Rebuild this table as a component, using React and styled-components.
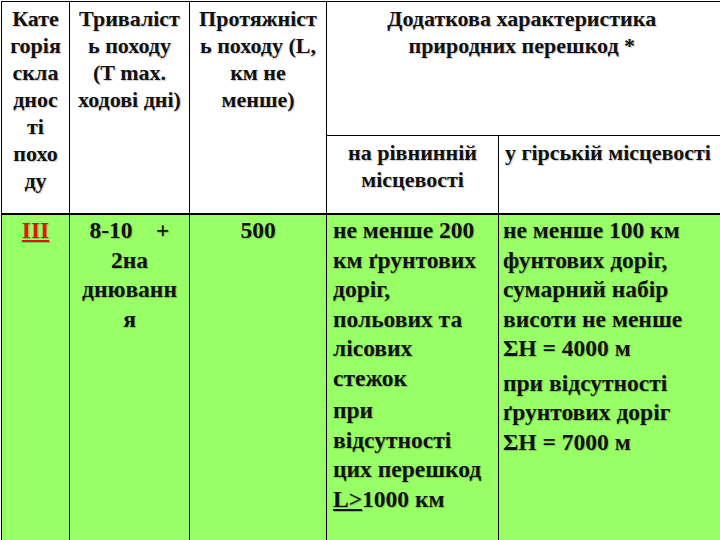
import React from "react";
import styled, { createGlobalStyle } from "styled-components";

const GlobalStyle = createGlobalStyle`
  html, body {
    margin: 0;
    padding: 0;
    background: #ffffff;
  }
  body {
    width: 720px;
    height: 540px;
    overflow: hidden;
    font-family: 'Liberation Serif', serif;
  }
  table, th, td, p, span {
    font-family: 'Liberation Serif', serif;
  }
`;

const Table = styled.table`
  width: 740px;
  table-layout: fixed;
  border-collapse: collapse;
  margin-top: 1px;
  margin-left: 1px;
  color: #111;
  font-weight: bold;
  text-shadow: 1px 1px 1px rgba(0, 0, 0, 0.22);
`;

const Col = styled.col`
  width: ${({ $w }) => $w}px;
`;

const HeadCell = styled.th`
  border: 1px solid #000;
  border-bottom: ${({ $thin }) => ($thin ? "1px" : "2px")} solid #000;
  border-top: ${({ $top }) => ($top ? "1px solid #000" : "none")};
  border-right: ${({ $open }) => ($open ? "none" : "1px solid #000")};
  vertical-align: top;
  text-align: ${({ $align }) => $align || "center"};
  font-size: 22px;
  font-weight: bold;
  line-height: 27px;
  white-space: nowrap;
  padding: 3px ${({ $padR }) => $padR || 2}px 0 ${({ $padL }) => $padL || 2}px;
  height: ${({ $h }) => $h || 0}px;
  background: #fff;
`;

const Cell = styled.td`
  border-left: 1px solid #000;
  border-right: ${({ $open }) => ($open ? "none" : "1px solid #000")};
  vertical-align: top;
  background: #99ff66;
  font-size: 23.5px;
  font-weight: bold;
  line-height: 29.5px;
  white-space: nowrap;
  padding: 1px 2px 0 ${({ $padL }) => $padL || 2}px;
  text-align: ${({ $padL }) => ($padL ? "left" : "center")};
  height: 324px;
`;

const Para = styled.p`
  margin: 0 0 ${({ $gap }) => $gap || 0}px;
`;

const Roman = styled.span`
  color: #e01408;
  text-decoration: underline;
`;

const Under = styled.span`
  text-decoration: underline;
`;

export default function App() {
  return (
    <>
      <GlobalStyle />
      <Table>
        <colgroup>
          <Col $w={68} />
          <Col $w={120} />
          <Col $w={137} />
          <Col $w={172} />
          <Col $w={243} />
        </colgroup>
        <thead>
          <tr>
            <HeadCell rowSpan={2} $top>
              Кате<br />горія<br />скла<br />днос<br />ті<br />похо<br />ду
            </HeadCell>
            <HeadCell rowSpan={2} $top>
              Триваліст<br />ь походу<br />(T max.<br />ходові дні)
            </HeadCell>
            <HeadCell rowSpan={2} $top>
              Протяжніст<br />ь походу (L,<br />км не<br />менше)
            </HeadCell>
            <HeadCell colSpan={2} $top $open $thin $h={130} $padR={27}>
              Додаткова характеристика<br />природних перешкод *
            </HeadCell>
          </tr>
          <tr>
            <HeadCell $h={74}>
              на рівнинній<br />місцевості
            </HeadCell>
            <HeadCell $open $h={74} $align="left" $padL={6}>
              у гірській місцевості
            </HeadCell>
          </tr>
        </thead>
        <tbody>
          <tr>
            <Cell>
              <Roman>III</Roman>
            </Cell>
            <Cell>
              8-10&nbsp;&nbsp;&nbsp;&nbsp;+<br />2на<br />днюванн<br />я
            </Cell>
            <Cell>500</Cell>
            <Cell $padL={6}>
              <Para $gap={3}>
                не менше 200<br />км ґрунтових<br />доріг,<br />польових та<br />лісових<br />стежок
              </Para>
              <Para>
                при<br />відсутності<br />цих перешкод<br />
                <Under>L&gt;</Under>1000 км
              </Para>
            </Cell>
            <Cell $padL={4}>
              <Para $gap={5}>
                не менше 100 км<br />фунтових доріг,<br />сумарний набір<br />висоти не менше<br />ΣH = 4000 м
              </Para>
              <Para>
                при відсутності<br />ґрунтових доріг<br />ΣH = 7000 м
              </Para>
            </Cell>
          </tr>
        </tbody>
      </Table>
    </>
  );
}
